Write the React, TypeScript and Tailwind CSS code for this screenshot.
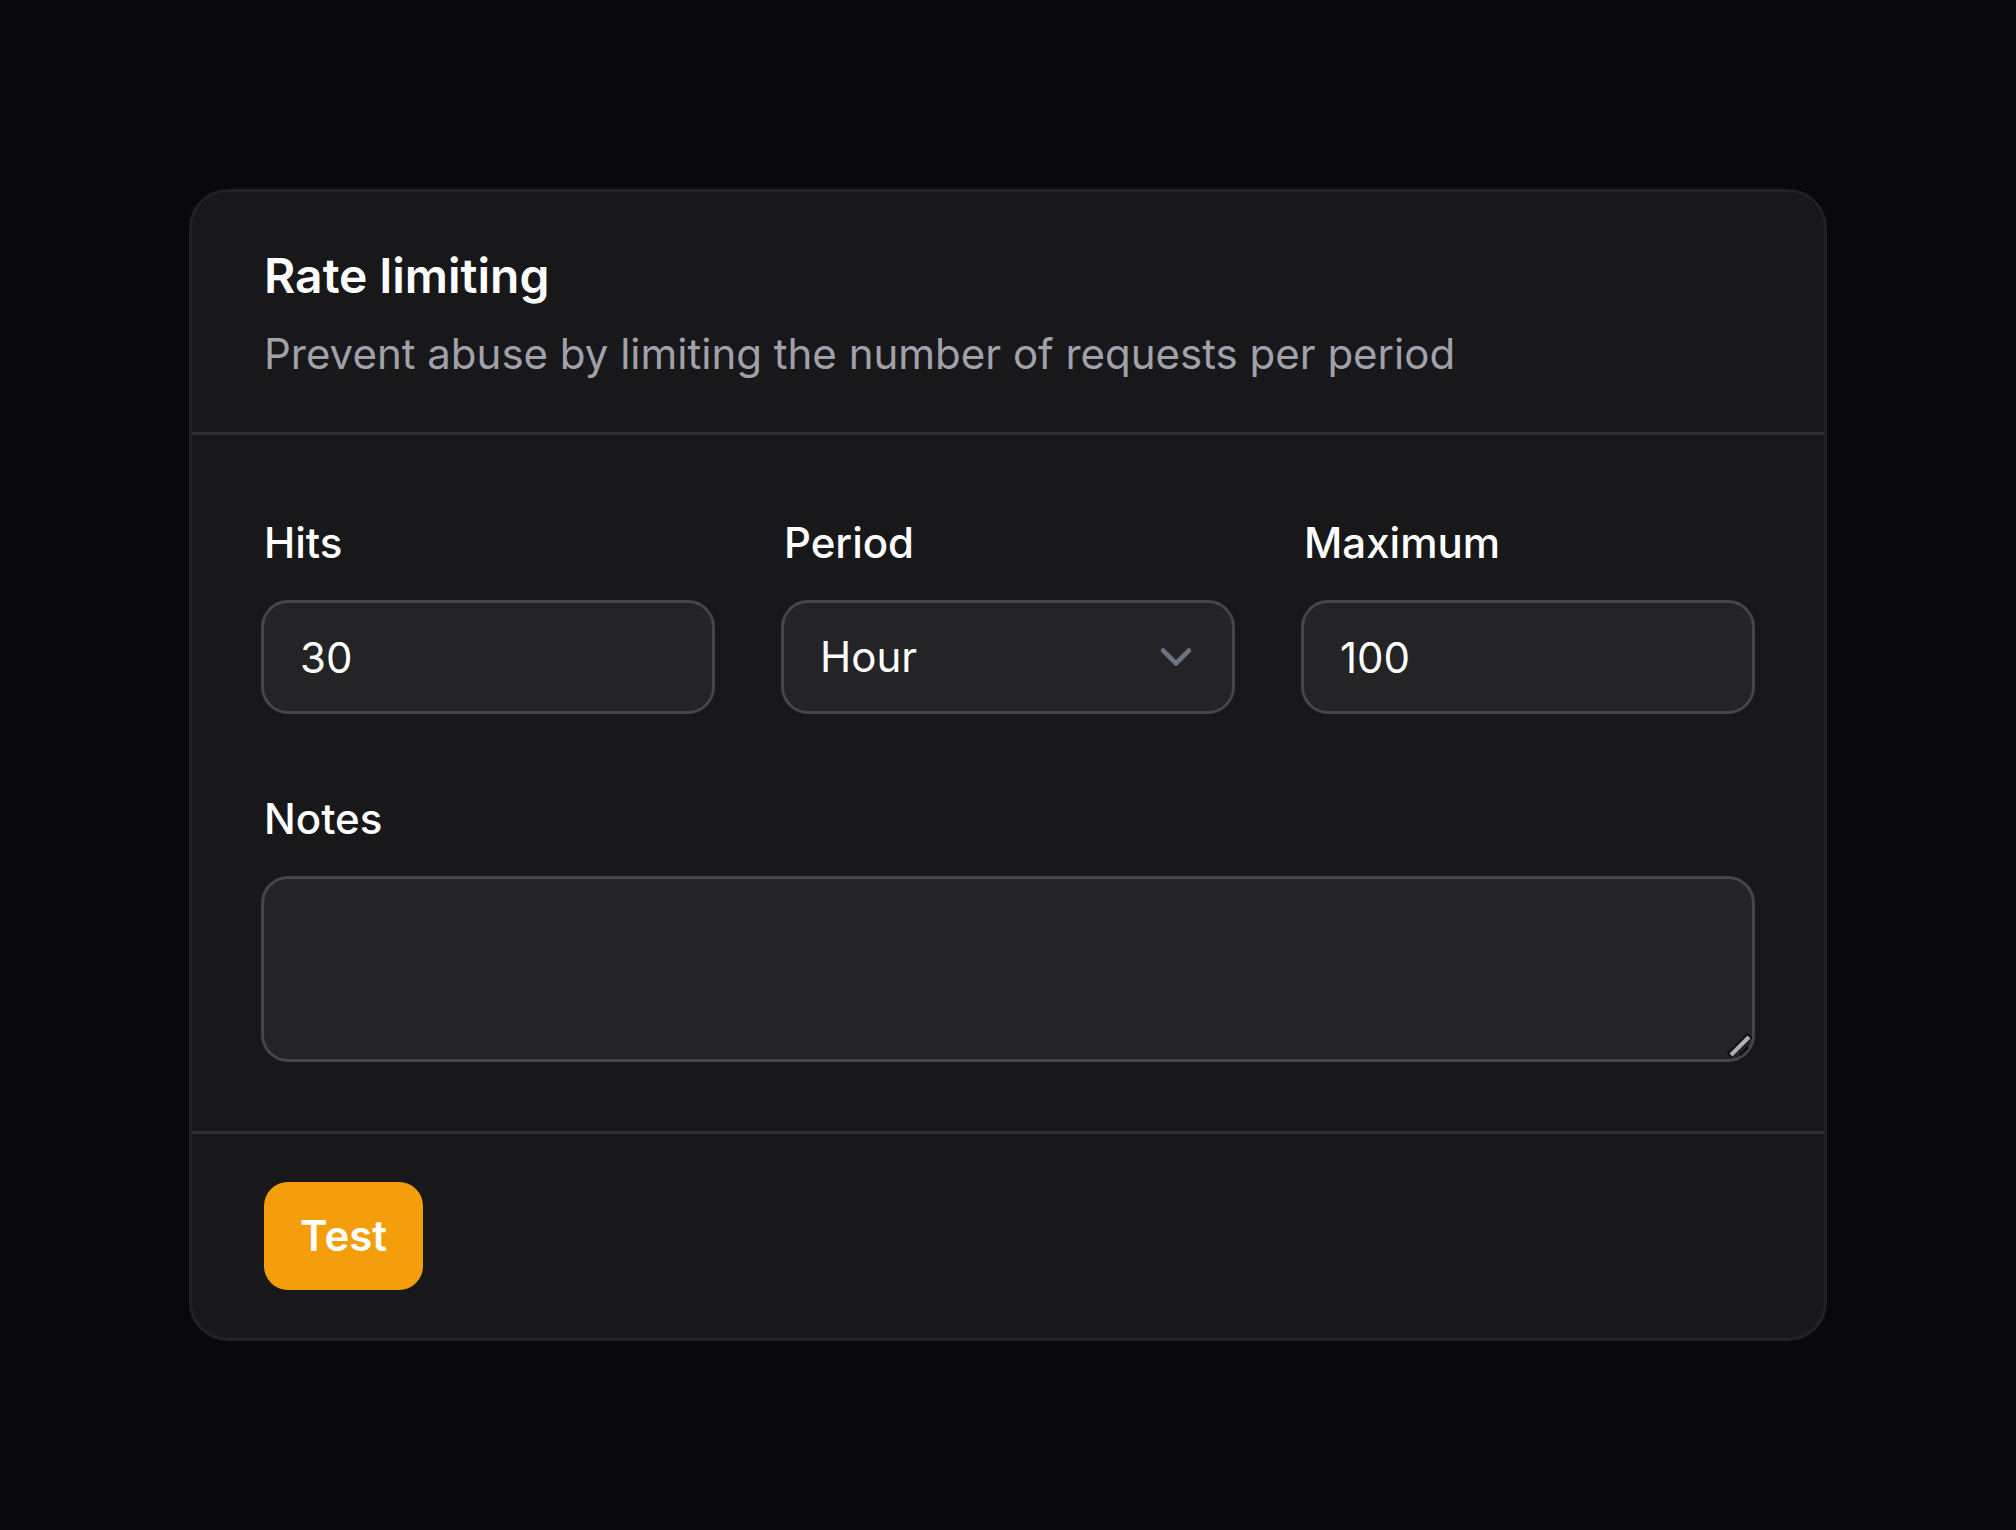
import { useId } from "react";
import type { ReactNode } from "react";

const CONTROL =
  "block w-full rounded-3xl bg-[#242427] px-9 text-[42px] text-white shadow-[0_0_0_3px_#464649] outline-none";

function Field({
  label,
  className,
  children,
}: {
  label: string;
  className?: string;
  children: (id: string) => ReactNode;
}) {
  const id = useId();
  return (
    <div className={`grid min-w-0 gap-6 ${className ?? ""}`}>
      <label htmlFor={id} className="text-[42px] leading-[72px] font-medium text-white">
        {label}
      </label>
      {children(id)}
    </div>
  );
}

export default function App() {
  return (
    <main className="flex min-h-screen items-center bg-[#09090b] px-48 py-12 font-['Inter',sans-serif] [font-optical-sizing:none] antialiased">
      <form
        className="min-w-0 flex-1 rounded-[36px] bg-[#18181b] shadow-[0_0_0_3px_#222224]"
        onSubmit={(e) => e.preventDefault()}
      >
        <header className="grid gap-3 px-[72px] py-12">
          <h1 className="text-5xl leading-[72px] font-semibold text-white">Rate limiting</h1>
          <p className="text-[42px] leading-[60px] text-[#a1a1aa]">
            Prevent abuse by limiting the number of requests per period
          </p>
        </header>

        <div className="grid grid-cols-3 gap-[72px] border-t-3 border-[#2f2f32] p-[72px]">
          <Field label="Hits">
            {(id) => (
              <input
                id={id}
                type="text"
                inputMode="numeric"
                defaultValue="30"
                className={`${CONTROL} h-27 py-6 leading-[60px]`}
              />
            )}
          </Field>
          <Field label="Period">
            {(id) => (
              <div className="relative">
                <select id={id} defaultValue="hour" className={`${CONTROL} h-27 appearance-none py-6 leading-[60px]`}>
                  <option value="minute">Minute</option>
                  <option value="hour">Hour</option>
                  <option value="day">Day</option>
                </select>
                <svg
                  viewBox="0 0 20 20"
                  fill="none"
                  aria-hidden="true"
                  className="pointer-events-none absolute inset-y-0 right-6 my-auto size-16"
                >
                  <path
                    d="M6 8l4 4 4-4"
                    stroke="#6b7280"
                    strokeWidth="1.5"
                    strokeLinecap="round"
                    strokeLinejoin="round"
                  />
                </svg>
              </div>
            )}
          </Field>
          <Field label="Maximum">
            {(id) => (
              <input
                id={id}
                type="text"
                inputMode="numeric"
                defaultValue="100"
                className={`${CONTROL} h-27 py-6 leading-[60px]`}
              />
            )}
          </Field>
          <Field label="Notes" className="col-span-3">
            {(id) => (
              <div className="relative">
                <textarea id={id} className={`${CONTROL} h-45 resize-none py-[18px] leading-[72px]`} />
                <svg
                  viewBox="0 0 30 30"
                  fill="none"
                  aria-hidden="true"
                  className="pointer-events-none absolute right-0 bottom-0 size-[30px]"
                >
                  <path d="M7 27L28 6" stroke="#101012" strokeWidth="7" />
                  <path d="M9 26L27 8" stroke="#b0b0b1" strokeWidth="4" />
                  <path d="M18 26L26 18" stroke="#101012" strokeWidth="3" />
                </svg>
              </div>
            )}
          </Field>
        </div>

        <footer className="border-t-3 border-[#2f2f32] px-[72px] py-12">
          <button
            type="submit"
            className="block h-27 rounded-3xl bg-[#f59e0b] px-9 text-[42px] leading-[60px] font-semibold text-white"
          >
            Test
          </button>
        </footer>
      </form>
    </main>
  );
}
